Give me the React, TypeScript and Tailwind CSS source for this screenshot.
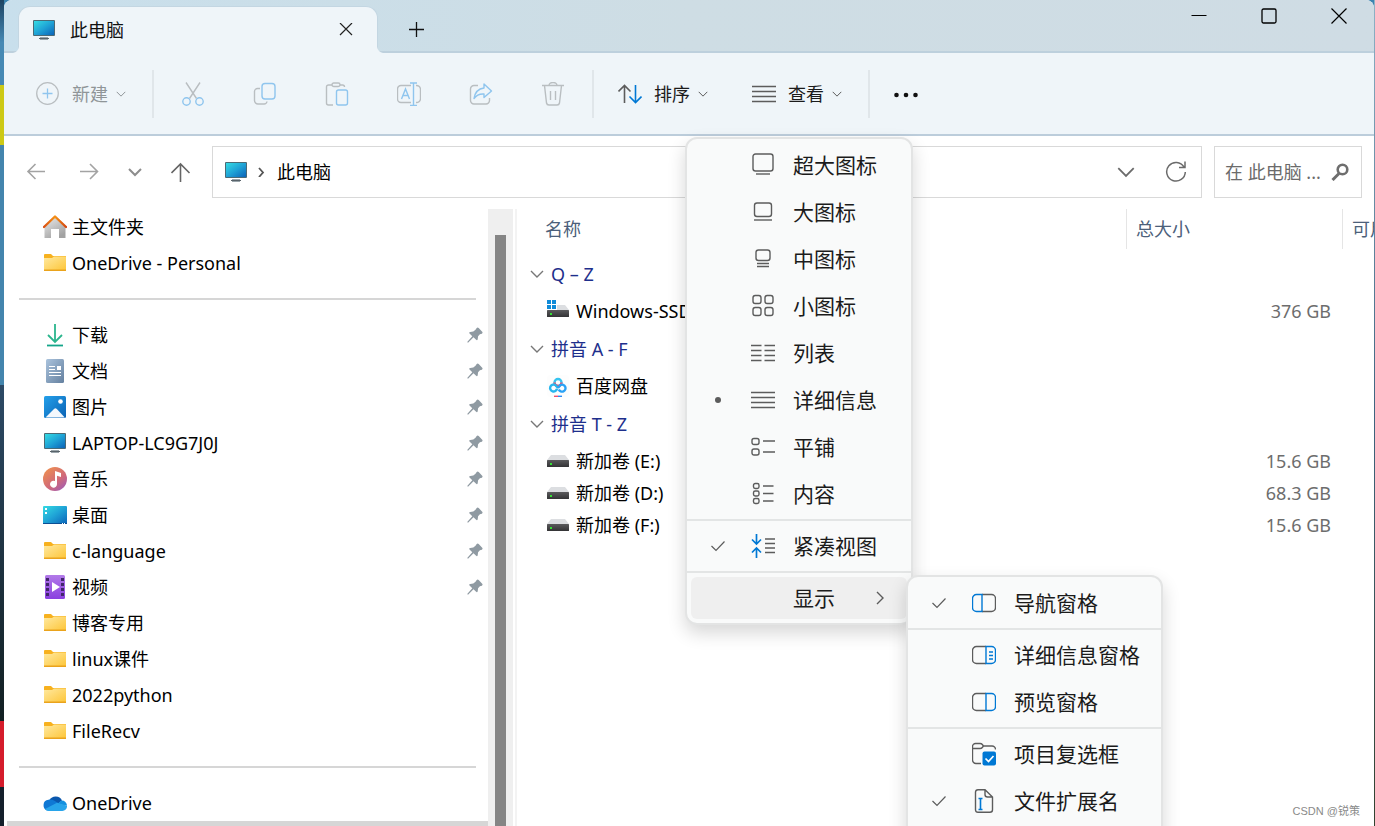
import React from 'react';

interface IconProps {
    className?: string;
}

const GRAY = '#5c5c5c';
const BLUE = '#0078d4';

/* ---------- shared glyphs ---------- */

const Monitor: React.FC<IconProps> = ({ className }) => (
    <svg className={className ?? 'w-6 h-6 shrink-0'} viewBox="0 0 24 24" fill="none">
        <defs>
            <linearGradient id="screen" x1="0" y1="0" x2="1" y2="1">
                <stop offset="0" stopColor="#35dbe3" />
                <stop offset="0.5" stopColor="#1fa3d6" />
                <stop offset="1" stopColor="#0b63b8" />
            </linearGradient>
        </defs>
        <rect x="8" y="19" width="8" height="3" fill="#9aa5ab" />
        <rect x="7" y="20" width="10" height="1" fill="#59636a" />
        <rect x="1" y="2" width="22" height="16" rx="1" fill="#4a6a76" />
        <rect x="2" y="3" width="20" height="14" fill="url(#screen)" />
    </svg>
);

const ChevronDown: React.FC<IconProps> = ({ className }) => (
    <svg className={className} viewBox="0 0 14 14" fill="none" stroke="currentColor" strokeWidth="1.4">
        <path d="M1 4l6 6 6-6" />
    </svg>
);

const Folder = () => (
    <svg className="w-6 h-6 shrink-0" viewBox="0 0 24 24">
        <defs>
            <linearGradient id="folder" x1="0" y1="0" x2="1" y2="1">
                <stop offset="0" stopColor="#ffe9a0" />
                <stop offset="1" stopColor="#fdc63a" />
            </linearGradient>
        </defs>
        <path d="M1 4a1 1 0 0 1 1-1h6l2 2h13v4H1z" fill="#f7b11e" />
        <path d="M1 7h8l2-1.500h12V19H1z" fill="url(#folder)" />
        <path d="M1 18.500h22V20H1z" fill="#eaa31c" />
    </svg>
);

const Home = () => (
    <svg className="w-6 h-6 shrink-0" viewBox="0 0 24 24">
        <defs>
            <linearGradient id="wall" x1="0" y1="0" x2="0.600" y2="1">
                <stop offset="0" stopColor="#ececec" />
                <stop offset="1" stopColor="#a2a2a2" />
            </linearGradient>
            <linearGradient id="roof" x1="0" y1="0" x2="1" y2="0">
                <stop offset="0" stopColor="#d94f12" />
                <stop offset="0.500" stopColor="#f59216" />
                <stop offset="1" stopColor="#d2450f" />
            </linearGradient>
        </defs>
        <path d="M1.500 12.500L12 2l10.500 10.500V23H16v-9H8v9H1.500z" fill="url(#wall)" />
        <path d="M1 12L12 1.500 23 12" fill="none" stroke="url(#roof)" strokeWidth="2.400" strokeLinejoin="round" strokeLinecap="round" />
    </svg>
);

const Download = () => (
    <svg className="w-6 h-6 shrink-0" viewBox="0 0 24 24" fill="none" strokeWidth="1.800">
        <path d="M12 1v17M5 12l7 7 7-7" stroke="#2bb58d" />
        <path d="M4 22.500h16" stroke="#14a58a" />
    </svg>
);

const Documents = () => (
    <svg className="w-6 h-6 shrink-0" viewBox="0 0 24 24">
        <defs>
            <linearGradient id="doc" x1="0" y1="0" x2="1" y2="1">
                <stop offset="0" stopColor="#aac3dd" />
                <stop offset="1" stopColor="#64809f" />
            </linearGradient>
        </defs>
        <rect x="3" y="0" width="18" height="24" rx="1.500" fill="url(#doc)" />
        <path d="M6 7.500h6M6 10.500h6M6 13.500h12M6 16.500h12" stroke="#fff" />
        <rect x="14" y="7" width="4" height="4" fill="#fff" />
    </svg>
);

const Pictures = () => (
    <svg className="w-6 h-6 shrink-0" viewBox="0 0 24 24">
        <defs>
            <linearGradient id="pic" x1="0" y1="0" x2="1" y2="1">
                <stop offset="0" stopColor="#23a0ea" />
                <stop offset="1" stopColor="#0b62b4" />
            </linearGradient>
        </defs>
        <rect x="1" y="1" width="22" height="22" rx="1.500" fill="url(#pic)" />
        <path d="M2.500 22.500L11 14c1-1 1.800-1 2.800 0l8 8.500z" fill="#f3f8fd" />
        <circle cx="17.500" cy="6.500" r="2.300" fill="#fff" />
    </svg>
);

const Music = () => (
    <svg className="w-6 h-6 shrink-0" viewBox="0 0 24 24">
        <defs>
            <linearGradient id="music" x1="0.100" y1="0" x2="0.900" y2="1">
                <stop offset="0" stopColor="#f0914d" />
                <stop offset="0.600" stopColor="#d0697a" />
                <stop offset="1" stopColor="#9c5cba" />
            </linearGradient>
        </defs>
        <circle cx="12" cy="12" r="12" fill="url(#music)" />
        <path d="M12 4l6 2v4l-4-1.200V17a3.500 3.500 0 1 1-2-3z" fill="#fff" />
    </svg>
);

const Desktop = () => (
    <svg className="w-6 h-6 shrink-0" viewBox="0 0 24 24">
        <rect x="0" y="3" width="24" height="18" rx="1" fill="url(#screen)" />
        <path d="M0 20.500h24" stroke="#0c4f94" />
        <path d="M2 5h2v2H2zM2 9h2v2H2zM19 20h1v1h-1zM21 20h1v1h-1z" fill="#fff" />
    </svg>
);

const Videos = () => (
    <svg className="w-6 h-6 shrink-0" viewBox="0 0 24 24">
        <defs>
            <linearGradient id="film" x1="0" y1="0" x2="0" y2="1">
                <stop offset="0" stopColor="#b27ae8" />
                <stop offset="1" stopColor="#8a3fe0" />
            </linearGradient>
        </defs>
        <rect x="2" y="0" width="20" height="24" rx="1.500" fill="url(#film)" />
        <path d="M3 3h3v3H3zM3 8h3v3H3zM3 13h3v3H3zM3 18h3v3H3zM18 3h3v3h-3zM18 8h3v3h-3zM18 13h3v3h-3zM18 18h3v3h-3z" fill="#41266b" />
        <path d="M9 7l8 5-8 5z" fill="#fff" />
    </svg>
);

const Cloud = () => (
    <svg className="w-6 h-6 shrink-0" viewBox="0 0 24 24">
        <path d="M6.500 9A7 7 0 0 1 19 9.500l-6 5z" fill="#0a57ad" />
        <path d="M5.500 8.800c2-.8 4-.3 5.500.7l5 3-11 7A5.400 5.400 0 0 1 5.500 8.800z" fill="#0f78d4" />
        <path d="M18.500 9.500a5.200 5.200 0 0 1 5.500 5.200L14 13z" fill="#1490df" />
        <path d="M2 18l12-6.300c3 1.600 6 1 10 3.300a4.700 4.700 0 0 1-4.800 5H5.500C4 20 2.800 19.300 2 18z" fill="#28a4ea" />
    </svg>
);

const Pin = () => (
    <svg className="w-4 h-4 shrink-0" viewBox="0 0 16 16" fill="#8f9aa2">
        <path d="M9.500 1.200Q10.500 0 11.700 1l3.500 3.700q.9 1-.3 2l-2 .5-1.800 2-.4 3q-.4 1.500-1.600.6L6.500 10.300 1 15.800l-.8-.8L5.300 9.300 2.500 6.600q-.9-1.300.8-1.600l3-.4 2.200-1.800z" />
    </svg>
);

const Drive: React.FC<{ system?: boolean }> = ({ system }) => (
    <svg className="w-[22px] h-[22px] shrink-0" viewBox="0 0 22 22">
        <defs>
            <linearGradient id="drive" x1="0" y1="0" x2="0" y2="1">
                <stop offset="0" stopColor="#5a5a5c" />
                <stop offset="1" stopColor="#333335" />
            </linearGradient>
        </defs>
        <path d="M4 5h14l4 5H0z" fill="#dcdee1" />
        <rect x="0" y="10" width="22" height="7" rx="0.500" fill="url(#drive)" />
        <rect x="3" y="13" width="2" height="2" fill="#35e035" />
        {system && (
            <>
                <rect x="0" y="0" width="10" height="10" fill="#fff" />
                <path d="M0 0h4v4H0zM5 0h4v4H5zM0 5h4v4H0zM5 5h4v4H5z" fill="#108bd8" />
            </>
        )}
    </svg>
);

const Netdisk = () => (
    <svg className="w-[22px] h-[22px] shrink-0" viewBox="0 0 22 22" fill="none" strokeWidth="2.400">
        <rect x="0" y="0" width="22" height="22" rx="3" fill="#fdfdfd" />
        <circle cx="11" cy="7.500" r="3.500" stroke="#36c4f0" />
        <path d="M7.500 7.500a3.500 3.500 0 0 0 7 0" stroke="#f2506c" />
        <path d="M10 13.800A3.500 3.500 0 1 1 8 9.800L11 13" stroke="#28b6ee" />
        <path d="M11 13l2.500-3a3.500 3.500 0 1 1-1.700 4.500" stroke="#2aa2f6" />
        <path d="M7 21.300h4" stroke="#f2506c" strokeWidth="1.400" />
        <path d="M11 21.300h4" stroke="#2a8cf6" strokeWidth="1.400" />
    </svg>
);

/* ---------- menu glyphs ---------- */

const MenuSvg: React.FC<{ children: React.ReactNode }> = ({ children }) => (
    <svg className="w-6 h-6 shrink-0" viewBox="0 0 24 24" fill="none" stroke={GRAY} strokeWidth="1.400">
        {children}
    </svg>
);

const ExtraLargeIcon = () => <MenuSvg><rect x="2" y="1" width="20" height="17" rx="2.500" /><path d="M5 21h14" /></MenuSvg>;
const LargeIcon = () => <MenuSvg><rect x="3.500" y="3" width="17" height="13.500" rx="2.500" /><path d="M3 20h18" /></MenuSvg>;
const MediumIcon = () => <MenuSvg><rect x="5" y="3" width="14" height="10.500" rx="2.500" /><path d="M6 16.500h12M6 19.500h12" /></MenuSvg>;
const SmallIcon = () => (
    <MenuSvg>
        <rect x="2" y="1.500" width="8" height="8" rx="2.200" />
        <rect x="14" y="1.500" width="8" height="8" rx="2.200" />
        <rect x="2" y="13.500" width="8" height="8" rx="2.200" />
        <rect x="14" y="13.500" width="8" height="8" rx="2.200" />
    </MenuSvg>
);
const ListIcon = () => <MenuSvg><path d="M0 4.500h10.500M0 9.500h10.500M0 14.500h10.500M0 19.500h10.500M13.500 4.500H24M13.500 9.500H24M13.500 14.500H24M13.500 19.500H24" /></MenuSvg>;
const DetailsIcon = () => <MenuSvg><path d="M0 4.500h24M0 9.500h24M0 14.500h24M0 19.500h24" /></MenuSvg>;
const TilesIcon = () => (
    <MenuSvg>
        <rect x="1" y="3.500" width="7" height="6" rx="2" />
        <rect x="1" y="14" width="7" height="6" rx="2" />
        <path d="M12 6h12M12 17h12" />
    </MenuSvg>
);
const ContentIcon = () => (
    <MenuSvg>
        <rect x="2.500" y="1.500" width="5.500" height="5" rx="1.700" />
        <rect x="2.500" y="9" width="5.500" height="5" rx="1.700" />
        <rect x="2.500" y="16.500" width="5.500" height="5" rx="1.700" />
        <path d="M12 4h10.500M12 11.500h10.500M12 19h10.500" />
    </MenuSvg>
);
const CompactIcon = () => (
    <MenuSvg>
        <path d="M5.500 0v9.500M1 5.500L5.500 10 10 5.500M5.500 24v-9.500M1 18.500L5.500 14l4.500 4.500" stroke={BLUE} strokeWidth="1.700" />
        <path d="M14 5h10M14 9.500h10M14 14h10M14 18.500h10" />
    </MenuSvg>
);
const NavPaneIcon = () => (
    <MenuSvg>
        <path d="M10 3.500h9.500a4 4 0 0 1 4 4v9a4 4 0 0 1-4 4H10" />
        <path d="M10 3.500H4.500a4 4 0 0 0-4 4v9a4 4 0 0 0 4 4H10z" stroke={BLUE} />
    </MenuSvg>
);
const DetailsPaneIcon = () => (
    <MenuSvg>
        <path d="M14 3.500H4.500a4 4 0 0 0-4 4v9a4 4 0 0 0 4 4H14" />
        <path d="M14 3.500h5.500a4 4 0 0 1 4 4v9a4 4 0 0 1-4 4H14zM17 9h4M17 12.500h4M17 16h4" stroke={BLUE} />
    </MenuSvg>
);
const PreviewPaneIcon = () => (
    <MenuSvg>
        <path d="M14 3.500H4.500a4 4 0 0 0-4 4v9a4 4 0 0 0 4 4H14" />
        <path d="M14 3.500h5.500a4 4 0 0 1 4 4v9a4 4 0 0 1-4 4H14z" stroke={BLUE} />
    </MenuSvg>
);
const CheckboxesIcon = () => (
    <MenuSvg>
        <path d="M9 21.500H4a3.500 3.500 0 0 1-3.500-3.500V4.500a3 3 0 0 1 3-3H8q1.500 0 2.300 1l1.200 1.500H20a3.500 3.500 0 0 1 3.500 3.500M.5 6.500h7.500q1.500 0 2.300-1L11.500 4" />
        <rect x="10.500" y="9.500" width="13.500" height="14" rx="2" fill={BLUE} stroke="none" />
        <path d="M13.500 16.500l3 3 5-5.500" stroke="#fff" strokeWidth="1.700" />
    </MenuSvg>
);
const ExtensionsIcon = () => (
    <MenuSvg>
        <path d="M13 .7H6A2.500 2.500 0 0 0 3.500 3v18A2.500 2.500 0 0 0 6 23.300h12a2.500 2.500 0 0 0 2.500-2.500V8zM13 .7V5.500A2.500 2.500 0 0 0 15.500 8h5" />
        <path d="M6.500 9.500h4M6.500 20.500h4M8.500 9.500v11" stroke={BLUE} strokeWidth="1.600" />
    </MenuSvg>
);

const CheckMark = () => (
    <svg className="w-3.5 h-3.5 shrink-0" viewBox="0 0 14 14" fill="none" stroke={GRAY} strokeWidth="1.200">
        <path d="M0.500 7l4.500 4.500L13.500 2.500" />
    </svg>
);

const Bullet = () => (
    <span className="w-3.5 flex justify-center shrink-0"><span className="w-1.5 h-1.5 rounded-full bg-[#5c5c5c]" /></span>
);

/* ---------- data ---------- */

interface MenuEntry {
    label: string;
    icon?: React.ReactNode;
    mark?: 'check' | 'dot';
    open?: boolean;
}

const viewMenu: MenuEntry[][] = [
    [
        { label: '超大图标', icon: <ExtraLargeIcon /> },
        { label: '大图标', icon: <LargeIcon /> },
        { label: '中图标', icon: <MediumIcon /> },
        { label: '小图标', icon: <SmallIcon /> },
        { label: '列表', icon: <ListIcon /> },
        { label: '详细信息', icon: <DetailsIcon />, mark: 'dot' },
        { label: '平铺', icon: <TilesIcon /> },
        { label: '内容', icon: <ContentIcon /> },
    ],
    [{ label: '紧凑视图', icon: <CompactIcon />, mark: 'check' }],
    [{ label: '显示', open: true }],
];

const showMenu: MenuEntry[][] = [
    [{ label: '导航窗格', icon: <NavPaneIcon />, mark: 'check' }],
    [
        { label: '详细信息窗格', icon: <DetailsPaneIcon /> },
        { label: '预览窗格', icon: <PreviewPaneIcon /> },
    ],
    [
        { label: '项目复选框', icon: <CheckboxesIcon /> },
        { label: '文件扩展名', icon: <ExtensionsIcon />, mark: 'check' },
    ],
];

const sidebar: { label: string; icon: React.ReactNode; pinned?: boolean }[][] = [
    [
        { label: '主文件夹', icon: <Home /> },
        { label: 'OneDrive - Personal', icon: <Folder /> },
    ],
    [
        { label: '下载', icon: <Download />, pinned: true },
        { label: '文档', icon: <Documents />, pinned: true },
        { label: '图片', icon: <Pictures />, pinned: true },
        { label: 'LAPTOP-LC9G7J0J', icon: <Monitor />, pinned: true },
        { label: '音乐', icon: <Music />, pinned: true },
        { label: '桌面', icon: <Desktop />, pinned: true },
        { label: 'c-language', icon: <Folder />, pinned: true },
        { label: '视频', icon: <Videos />, pinned: true },
        { label: '博客专用', icon: <Folder /> },
        { label: 'linux课件', icon: <Folder /> },
        { label: '2022python', icon: <Folder /> },
        { label: 'FileRecv', icon: <Folder /> },
    ],
    [{ label: 'OneDrive', icon: <Cloud /> }],
];

const groups = [
    { title: 'Q – Z', items: [{ name: 'Windows-SSD (C:)', icon: <Drive system />, size: '376 GB' }] },
    { title: '拼音 A - F', items: [{ name: '百度网盘', icon: <Netdisk />, size: '' }] },
    {
        title: '拼音 T - Z',
        items: [
            { name: '新加卷 (E:)', icon: <Drive />, size: '15.6 GB' },
            { name: '新加卷 (D:)', icon: <Drive />, size: '68.3 GB' },
            { name: '新加卷 (F:)', icon: <Drive />, size: '15.6 GB' },
        ],
    },
];

/* ---------- menus ---------- */

const Menu: React.FC<{ groups: MenuEntry[][]; className: string; submenu?: React.ReactNode }> = ({ groups, className, submenu }) => (
    <div role="menu" className={`absolute border-2 border-[#e3e4e4] rounded-xl bg-[#f9fafa] pt-px shadow-[0_8px_18px_rgba(0,0,0,0.16)] text-[21px] leading-8 text-[#1b1b1b] ${className}`}>
        {groups.map((group, i) => (
            <div key={i} className={i > 0 ? 'border-t-2 border-[#e3e5e5] pt-px pb-0.5' : 'pt-px pb-0.5'}>
                {group.map((entry) => (
                    <div key={entry.label} className="relative h-[47px] px-1 flex items-center">
                        <button role="menuitem" className={`w-full h-[42px] pl-5 flex items-center rounded-md whitespace-nowrap ${entry.open ? 'bg-[#efefef]' : ''}`}>
                            {entry.mark === 'check' && <CheckMark />}
                            {entry.mark === 'dot' && <Bullet />}
                            {!entry.mark && <span className="w-3.5 shrink-0" />}
                            <span className="w-6 h-6 ml-[26px] mr-[18px] shrink-0">{entry.icon}</span>
                            {entry.label}
                            {entry.open && (
                                <svg className="w-3.5 h-3.5 ml-auto mr-5" viewBox="0 0 14 14" fill="none" stroke={GRAY} strokeWidth="1.400">
                                    <path d="M4 1l6 6-6 6" />
                                </svg>
                            )}
                        </button>
                        {entry.open && submenu}
                    </div>
                ))}
            </div>
        ))}
    </div>
);

/* ---------- window parts ---------- */

const TitleBar = () => (
    <header className="flex h-[53px] border-b-2 border-[#bdd0dd] bg-linear-to-r from-[#c8dfec] via-[#cedde4] to-[#cfdce4]">
        <div className="relative z-10 w-[360px] h-[47px] mt-1.5 ml-3.5 pl-[13px] pr-[17px] flex items-center rounded-t-xl bg-[#eff5f9] border-t border-x border-[#c3d6e2]">
            {/* curved feet of the tab */}
            <svg className="absolute bottom-0 -left-1.5 w-1.5 h-1.5" viewBox="0 0 6 6"><path d="M6 0v6H0q5-1 6-6z" fill="#eff5f9" /></svg>
            <svg className="absolute bottom-0 -right-1.5 w-1.5 h-1.5" viewBox="0 0 6 6"><path d="M0 0v6h6q-5-1-6-6z" fill="#eff5f9" /></svg>
            <Monitor className="w-6 h-6 shrink-0" />
            <span className="ml-3.5 text-lg leading-6 text-[#111]">此电脑</span>
            <button aria-label="关闭标签页" className="ml-auto w-7 h-7 flex items-center justify-center">
                <svg className="w-3.5 h-3.5" viewBox="0 0 14 14" stroke="#222" strokeWidth="1.200"><path d="M1 0l12 12M13 0L1 12" /></svg>
            </button>
        </div>
        <button aria-label="新标签页" className="w-[76px] pt-1.5 flex items-center justify-center">
            <svg className="w-4 h-4" viewBox="0 0 16 16" stroke="#111" strokeWidth="1.300"><path d="M8.500 1v15M1 8.500h15" /></svg>
        </button>
        <div className="ml-auto flex h-8">
            <button aria-label="最小化" className="w-[70px] flex items-center justify-center">
                <svg className="w-4 h-4" viewBox="0 0 16 16" stroke="#000"><path d="M.5 7.500h15" /></svg>
            </button>
            <button aria-label="最大化" className="w-[70px] flex items-center justify-center">
                <svg className="w-4 h-4" viewBox="0 0 16 16" fill="none" stroke="#000" strokeWidth="1.300"><rect x="1" y="1" width="14" height="14" rx="1.500" /></svg>
            </button>
            <button aria-label="关闭" className="w-[70px] flex items-center justify-center">
                <svg className="w-4 h-4" viewBox="0 0 16 16" stroke="#000" strokeWidth="1.200"><path d="M.5 .5l15 15M15.500 .5l-15 15" /></svg>
            </button>
        </div>
    </header>
);

const fadedGray = '#b9bec1';
const fadedBlue = '#8fc5ee';

const tools = [
    {
        label: '剪切',
        icon: (
            <>
                <path d="M5 .5l10.500 16M19 .5L8.500 16.500" stroke={fadedGray} />
                <circle cx="5.500" cy="19.500" r="3.700" stroke={fadedBlue} />
                <circle cx="18.500" cy="19.500" r="3.700" stroke={fadedBlue} />
            </>
        ),
    },
    {
        label: '复制',
        icon: (
            <>
                <path d="M7 6.500H4.500a3 3 0 0 0-3 3v9a3.500 3.500 0 0 0 3.500 3.500h6a3 3 0 0 0 3-2.500" stroke={fadedGray} />
                <rect x="9" y="1.500" width="13" height="15.500" rx="3" stroke={fadedBlue} />
            </>
        ),
    },
    {
        label: '粘贴',
        icon: (
            <>
                <path d="M7 3H3.500a2 2 0 0 0-2 2v16a2 2 0 0 0 2 2H8M15 3h2.500a2 2 0 0 1 2 2" stroke={fadedGray} />
                <rect x="7" y="1" width="8" height="3.500" rx="1.700" stroke={fadedGray} />
                <rect x="11.500" y="8" width="11" height="15" rx="2" stroke={fadedBlue} />
            </>
        ),
    },
    {
        label: '重命名',
        icon: (
            <>
                <path d="M14 3.500H4a3.500 3.500 0 0 0-3.500 3.500v10A3.500 3.500 0 0 0 4 20.500h10M19 3.500a4 4 0 0 1 4.500 3.500v10a4 4 0 0 1-4.500 3.500" stroke={fadedGray} />
                <path d="M4.500 17L8.500 7l4 10M6 13.500h5.200M13 1h7M13 23.500h7M16.500 1v22.500" stroke={fadedBlue} />
            </>
        ),
    },
    {
        label: '共享',
        icon: (
            <>
                <path d="M9 3.500H5A3.500 3.500 0 0 0 1.500 7v11.500A3.500 3.500 0 0 0 5 22h12a3.500 3.500 0 0 0 3.500-3.500V16" stroke={fadedGray} />
                <path d="M15 2l7.500 7L15 15.500V12Q8.500 11.500 5 16.500 6.500 7 15 6z" stroke={fadedBlue} strokeLinejoin="round" />
            </>
        ),
    },
    {
        label: '删除',
        icon: <path d="M1 3.500h22M8 3.500a4 3 0 0 1 8 0M3.500 3.500l2 17.500a2.500 2.500 0 0 0 2.500 2h8a2.500 2.500 0 0 0 2.500-2l2-17.500M9.500 9v9M14.500 9v9" stroke={fadedGray} />,
    },
];

const Divider = () => <span className="w-0.5 h-12 shrink-0 bg-[#e0e6ea]" />;

const Toolbar = () => (
    <div className="relative z-20 h-[83px] pl-8 flex items-center border-b-2 border-[#bccddb] bg-[#eff5f9] text-lg leading-6 whitespace-nowrap">
        <button className="w-[116px] flex items-center text-[#8f9598]" disabled>
            <svg className="w-6 h-6 mr-3" viewBox="0 0 24 24" fill="none" strokeWidth="1.300">
                <circle cx="11.500" cy="11.500" r="10.800" stroke={fadedGray} />
                <path d="M11.500 6.500v10M6.500 11.500h10" stroke={fadedBlue} />
            </svg>
            新建
            <ChevronDown className="w-2.5 h-2.5 ml-2" />
        </button>
        <Divider />
        <div className="flex px-[3px]">
            {tools.map((tool) => (
                <button key={tool.label} aria-label={tool.label} className="w-[72px] flex justify-center" disabled>
                    <svg className="w-6 h-6" viewBox="0 0 24 24" fill="none" strokeWidth="1.400">{tool.icon}</svg>
                </button>
            ))}
        </div>
        <Divider />
        <button className="w-[134px] pl-6 flex items-center text-[#1b1b1b]">
            <svg className="w-6 h-6 mr-3" viewBox="0 0 24 24" fill="none" strokeWidth="1.600">
                <path d="M6.500 21V3M.5 9.500l6-6 6 6" stroke={GRAY} />
                <path d="M17.500 3v18M11.500 14.500l6 6 6-6" stroke={BLUE} />
            </svg>
            排序
            <ChevronDown className="w-2.5 h-2.5 ml-2 text-[#5c5c5c]" />
        </button>
        <div className="relative">
            <button className="w-[140px] h-[81px] pl-6 flex items-center text-[#1b1b1b]" aria-haspopup="menu" aria-expanded="true">
                <span className="w-6 h-6 mr-3"><DetailsIcon /></span>
                查看
                <ChevronDown className="w-2.5 h-2.5 ml-2 text-[#5c5c5c]" />
            </button>
            <Menu
                groups={viewMenu}
                className="w-[228px] top-[84px] left-[-43px]"
                submenu={<Menu groups={showMenu} className="w-[257px] top-px left-[219px] pb-6" />}
            />
        </div>
        <Divider />
        <button aria-label="查看更多" className="w-[72px] flex justify-center">
            <svg className="w-6 h-6" viewBox="0 0 24 24" fill="#111">
                <circle cx="2.500" cy="13" r="2.300" /><circle cx="12" cy="13" r="2.300" /><circle cx="21.500" cy="13" r="2.300" />
            </svg>
        </button>
    </div>
);

const AddressBar = () => (
    <div className="h-[73px] pl-[22px] pr-3 pt-2.5 flex text-lg leading-6">
        <div className="w-[186px] h-[52px] flex items-center shrink-0">
            <button aria-label="后退" className="mr-[34px]">
                <svg className="w-5 h-5" viewBox="0 0 20 20" fill="none" stroke="#a3a3a3" strokeWidth="1.600"><path d="M19 9.500H2M9.500 2L2 9.500 9.500 17" /></svg>
            </button>
            <button aria-label="前进" className="mr-7">
                <svg className="w-5 h-5" viewBox="0 0 20 20" fill="none" stroke="#a3a3a3" strokeWidth="1.600"><path d="M0 9.500h17M10 2l7.500 7.500L10 17" /></svg>
            </button>
            <button aria-label="最近浏览的位置" className="mr-[29px] text-[#8d8d8d]"><ChevronDown className="w-3.5 h-3.5 stroke-2" /></button>
            <button aria-label="上移">
                <svg className="w-5 h-5" viewBox="0 0 20 20" fill="none" stroke="#666" strokeWidth="1.600"><path d="M9.500 20V2M.5 11l9-9 9 9" /></svg>
            </button>
        </div>
        <nav className="flex-1 h-[52px] pl-[11px] pr-3.5 flex items-center border border-[#d9d9d9]">
            <Monitor className="w-6 h-6 shrink-0" />
            <svg className="w-2.5 h-2.5 ml-2 mr-[11px]" viewBox="0 0 10 10" fill="none" stroke="#555" strokeWidth="1.800"><path d="M3 1l4 4.500L3 10" /></svg>
            <a href="#" className="text-black">此电脑</a>
            <button aria-label="以前的位置" className="ml-auto text-[#6b6b6b]"><ChevronDown className="w-[18px] h-[18px]" /></button>
            <button aria-label="刷新" className="ml-[30px]">
                <svg className="w-[22px] h-[22px]" viewBox="0 0 22 22" fill="none" stroke="#6b6b6b" strokeWidth="1.500">
                    <path d="M19 6A9.300 9.300 0 1 0 20.300 11M20 .5v6h-6" />
                </svg>
            </button>
        </nav>
        <label className="w-[148px] h-[52px] ml-3 pl-2.5 pr-3 flex items-center border border-[#d9d9d9]">
            <input type="text" aria-label="搜索" placeholder="在 此电脑 ..." className="flex-1 min-w-0 outline-none placeholder:text-[#6b6b6b]" />
            <svg className="w-[18px] h-[18px] shrink-0" viewBox="0 0 18 18" fill="none" stroke="#6e6e6e">
                <circle cx="11.500" cy="6.500" r="4.800" strokeWidth="2.600" />
                <path d="M8 10.500L1.500 17" strokeWidth="3" />
            </svg>
        </label>
    </div>
);

const Sidebar = () => (
    <aside className="w-[484px] shrink-0 overflow-hidden flex flex-col text-lg leading-6 text-black">
        <div className="flex-1 min-h-0 overflow-hidden">
            {sidebar.map((section, i) => (
                <div key={i}>
                    {i > 0 && <div className="h-9 pl-[15px] pr-3 flex items-center"><hr className="w-full border-t-2 border-[#d6d6d6]" /></div>}
                    {section.map((item) => (
                        <a key={item.label} href="#" className="h-9 pl-[39px] pr-[5px] flex items-center gap-[5px]">
                            {item.icon}
                            <span className="flex-1">{item.label}</span>
                            {item.pinned && <Pin />}
                        </a>
                    ))}
                </div>
            ))}
        </div>
        <div className="h-[5px] ml-[3px] shrink-0 bg-[#d6d6d6]" />
    </aside>
);

const FileList = () => (
    <main className="flex-1 min-w-0 overflow-hidden text-lg leading-6">
        <table className="w-full table-fixed">
            <colgroup>
                <col />
                <col className="w-[216px]" />
                <col className="w-[31px]" />
            </colgroup>
            <thead>
                <tr className="h-[43px] text-left text-[#4c607a]">
                    <th className="p-0 align-top font-normal"><div className="h-10 pl-7 flex items-center border-r border-[#e5e5e5]">名称</div></th>
                    <th className="p-0 align-top font-normal"><div className="h-10 pl-[9px] flex items-center border-r border-[#e5e5e5]">总大小</div></th>
                    <th className="p-0 align-top font-normal"><div className="h-10 pl-[9px] flex items-center overflow-hidden whitespace-nowrap">可用</div></th>
                </tr>
            </thead>
            {groups.map((group) => (
                <tbody key={group.title}>
                    <tr className="h-[43px]">
                        <th colSpan={3} className="p-0 font-normal text-left text-[#1e2f8c]">
                            <div className="pl-[13px] flex items-center gap-[7px]">
                                <ChevronDown className="w-3.5 h-3.5 text-[#777]" />
                                {group.title}
                            </div>
                        </th>
                    </tr>
                    {group.items.map((item) => (
                        <tr key={item.name} className="h-8">
                            <td className="p-0"><div className="pl-[30px] flex items-center gap-[7px] text-black">{item.icon}{item.name}</div></td>
                            <td className="p-0 pr-3 text-right text-[#6d6d6d]">{item.size}</td>
                            <td className="p-0" />
                        </tr>
                    ))}
                </tbody>
            ))}
        </table>
    </main>
);

const App: React.FC = () => {
    return (
        <div className="h-screen flex overflow-hidden bg-[#3c84b0] font-['Noto_Sans','Noto_Sans_CJK_SC',sans-serif]">
            {/* strip of desktop left of the window */}
            <div className="w-1 shrink-0 flex flex-col">
                <div className="h-[85px] bg-linear-to-b from-[#1d4463] via-[#4689b4] to-[#4689b4]" />
                <div className="h-[60px] bg-[#cdc916]" />
                <div className="h-60 bg-[#4485ad]" />
                <div className="h-[336px] bg-linear-to-b from-[#2d4a66] to-[#121f22]" />
                <div className="h-[66px] bg-[#d51c2b]" />
                <div className="flex-1 bg-[#15202b]" />
            </div>
            <div className="flex-1 min-w-0 flex flex-col rounded-t-lg overflow-hidden bg-white">
                <TitleBar />
                <Toolbar />
                <AddressBar />
                <div className="flex-1 min-h-0 flex">
                    <Sidebar />
                    <div className="w-[25px] shrink-0 pt-[26px] flex justify-center bg-[#efefef]"><div className="w-[11px] bg-[#858585]" /></div>
                    <div className="w-1 shrink-0 border-r-2 border-[#f3f3f3]" />
                    <FileList />
                </div>
            </div>
            <div className="w-px shrink-0 bg-linear-to-b from-[#8fb2c6] via-[#3f6480] to-[#33422f]" />
            <div className="absolute bottom-[7px] right-[15px] text-[11px] leading-4 text-[#8a8a8a] font-['Liberation_Sans','Noto_Sans_CJK_SC',sans-serif]">CSDN @锐策</div>
        </div>
    );
};

export default App;
